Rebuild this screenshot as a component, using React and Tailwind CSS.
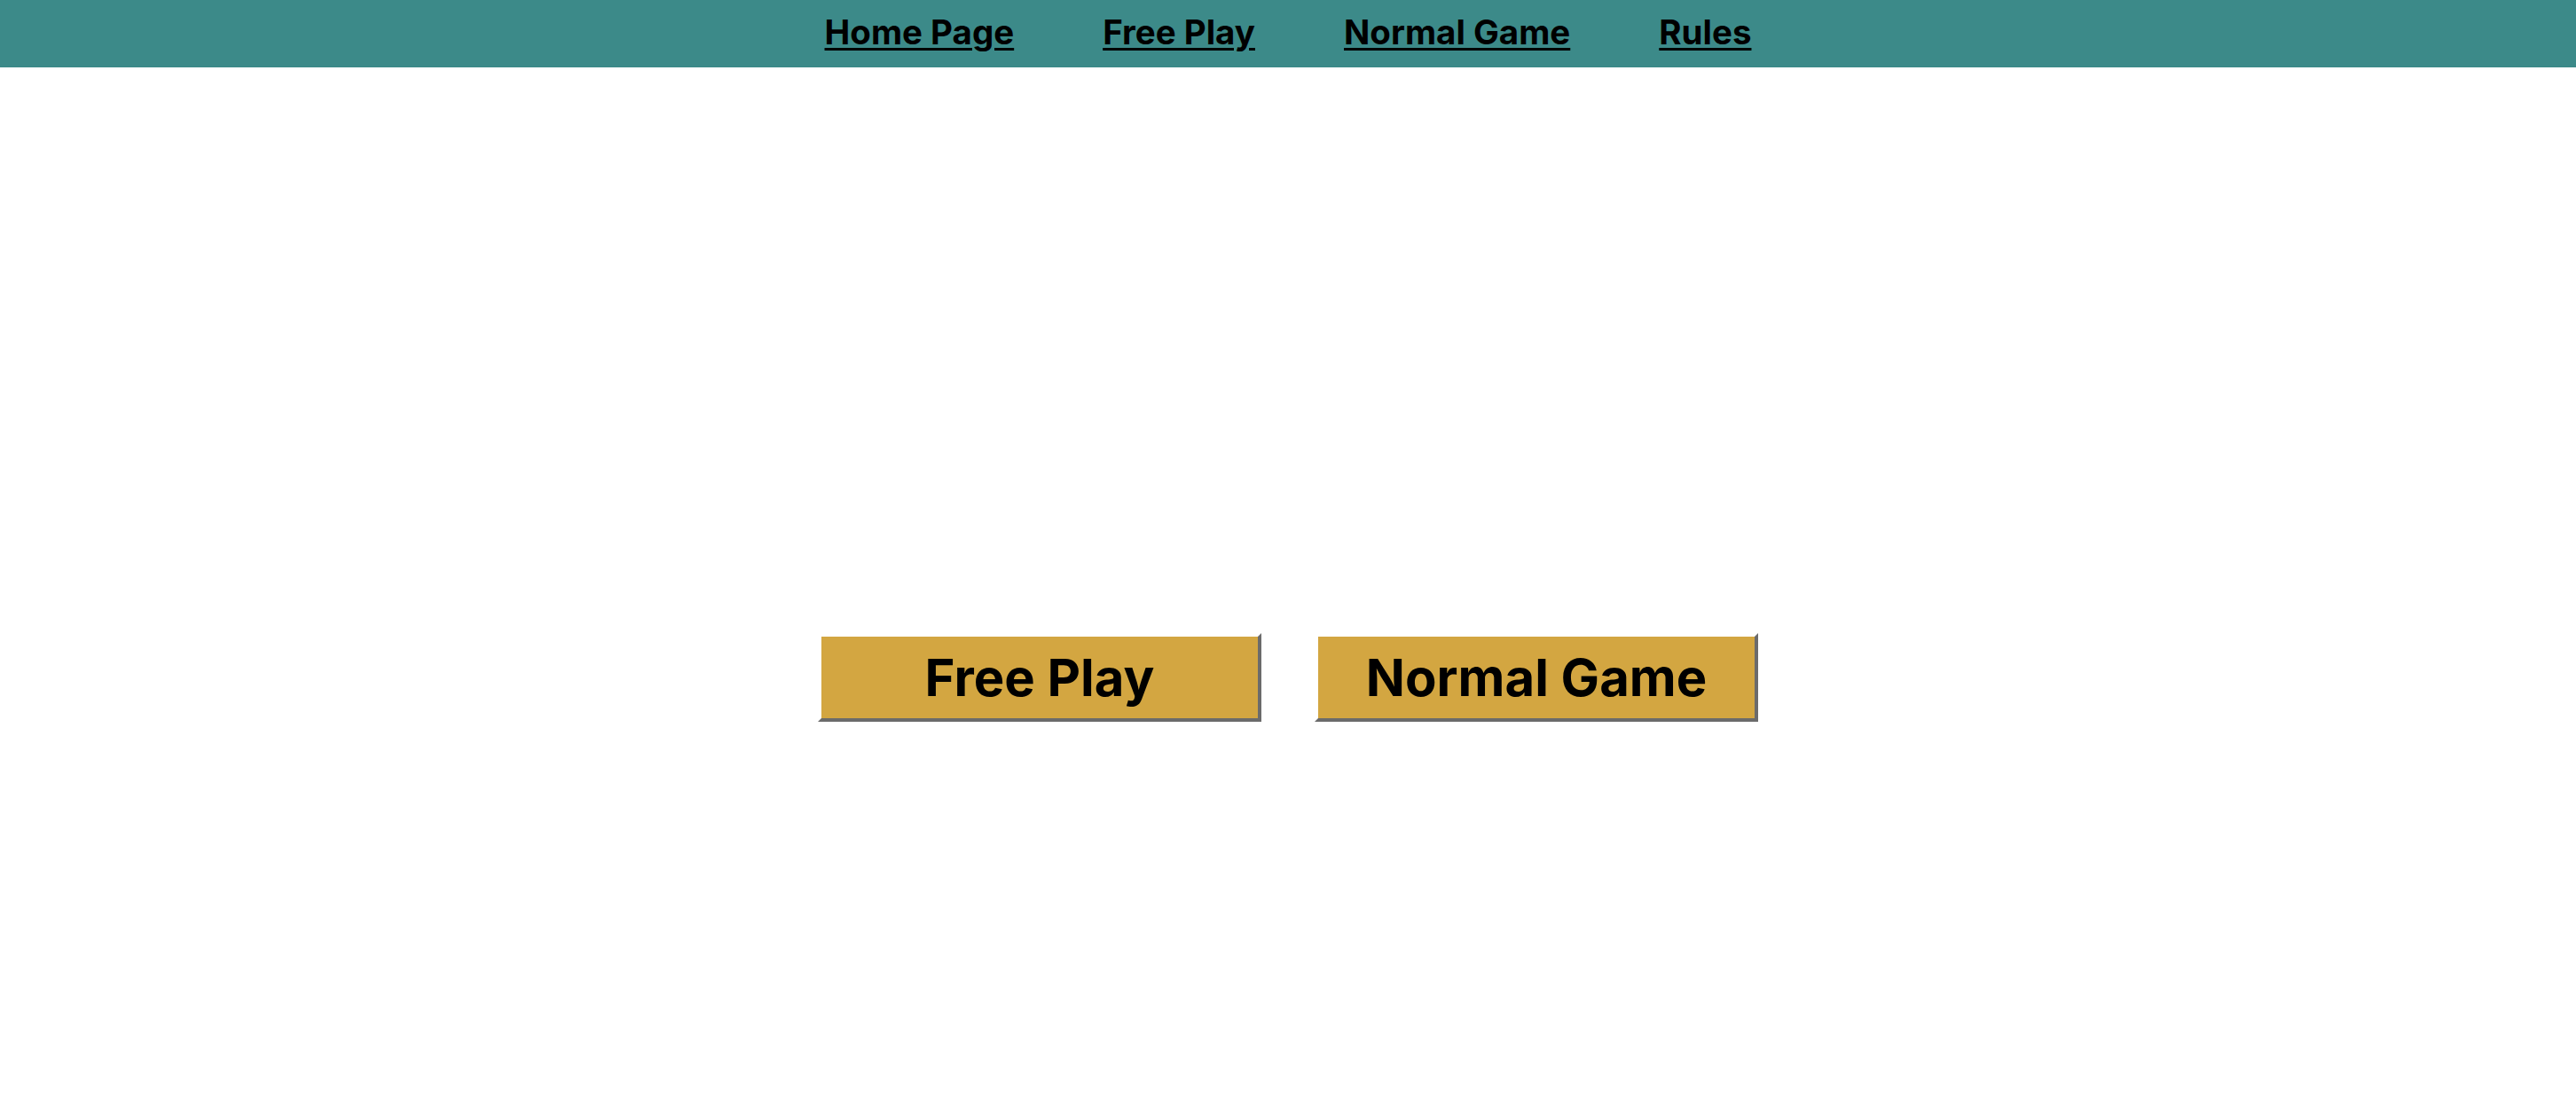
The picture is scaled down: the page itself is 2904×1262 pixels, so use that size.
import React from 'react';

const NAV_LINKS = ['Home Page', 'Free Play', 'Normal Game', 'Rules'];

const GameButton = ({ label }) => (
  <button
    type="button"
    className="flex h-[100px] w-[500px] items-center justify-center border-4 border-t-white border-l-white border-r-[#6b6b6b] border-b-[#6b6b6b] bg-[#d3a641] text-[58px] font-bold leading-none text-black"
  >
    {label}
  </button>
);

const App = () => {
  return (
    <div className="min-h-[1262px] bg-white font-['Inter',sans-serif]">
      {/* top navigation */}
      <nav className="flex h-[76px] items-center justify-center gap-[100px] bg-[#3c8a89] pb-1">
        {NAV_LINKS.map(link => (
          <a
            key={link}
            href="#"
            className="text-[38.5px] font-bold leading-none text-black underline decoration-[3px] underline-offset-[4px]"
          >
            {link}
          </a>
        ))}
      </nav>

      <main className="flex justify-center gap-[60px] pt-[638px]">
        <GameButton label="Free Play" />
        <GameButton label="Normal Game" />
      </main>
    </div>
  );
};

export default App;
